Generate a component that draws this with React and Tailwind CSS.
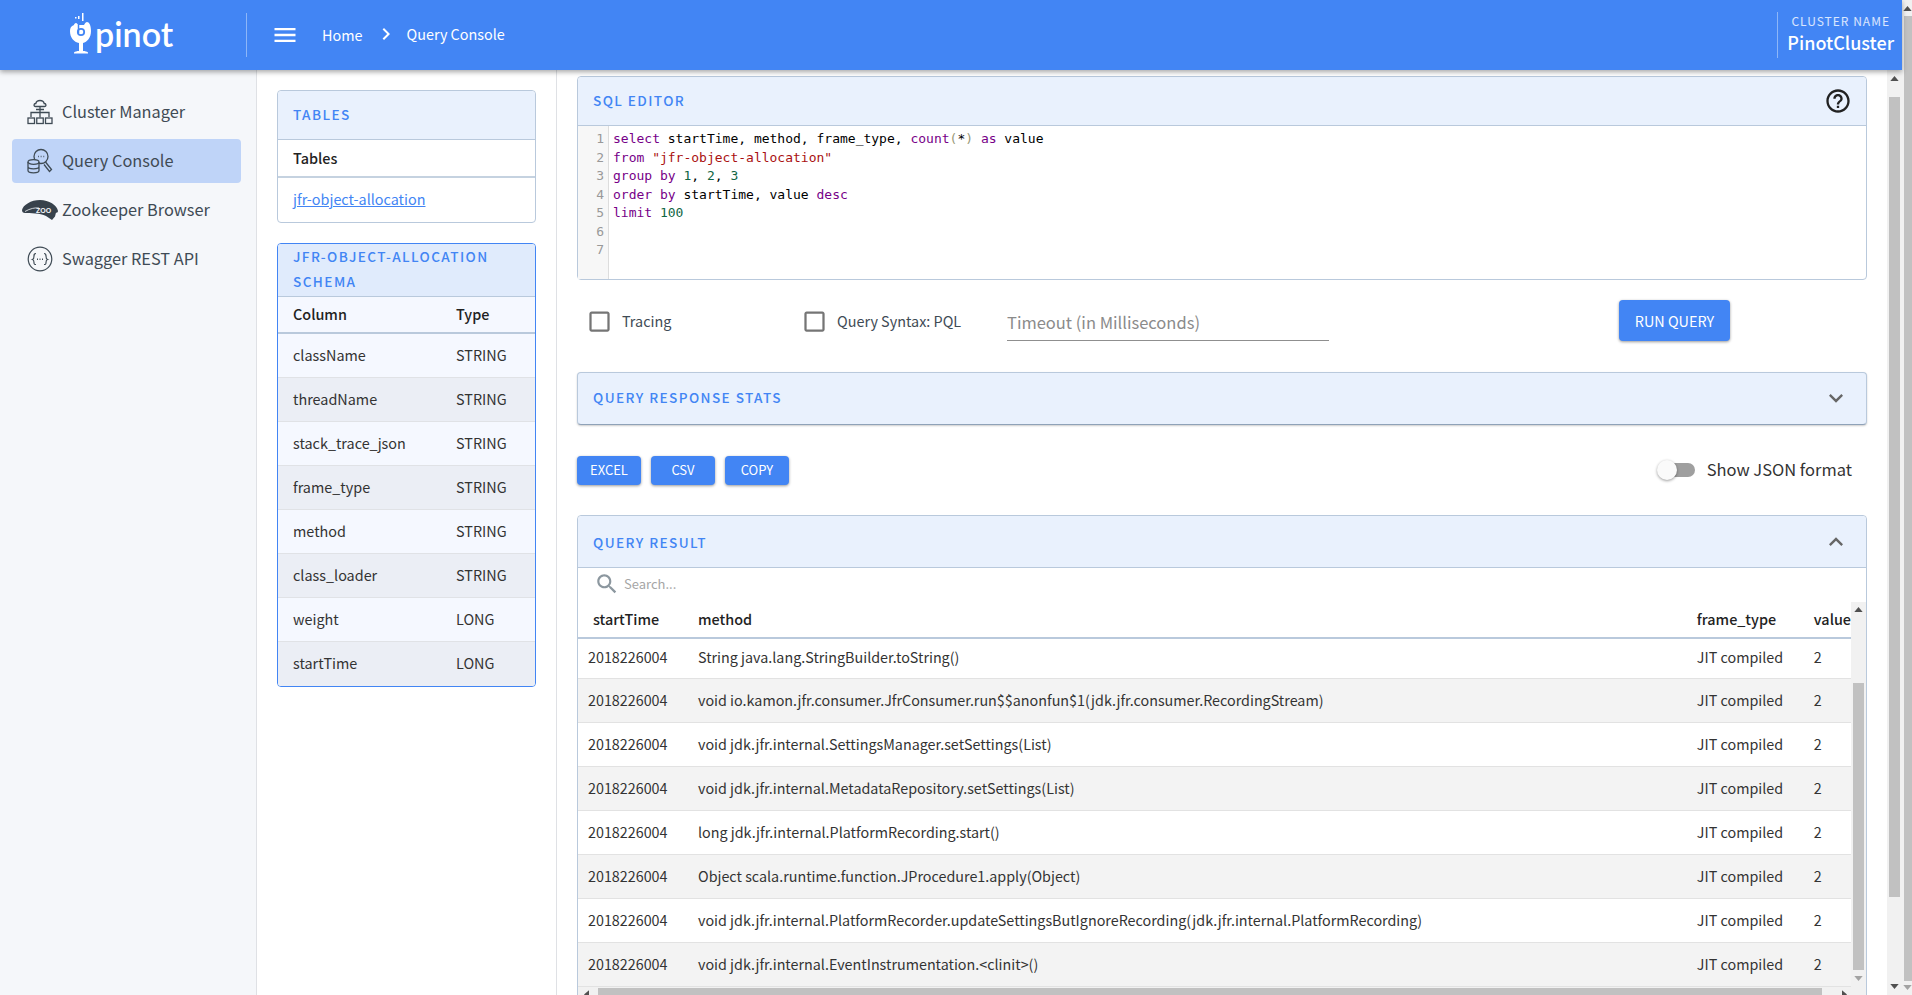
import React from "react";

const MENU = "M3 18h18v-2H3v2zm0-5h18v-2H3v2zm0-7v2h18V6H3z";
const CHEVRON = "M10 6L8.59 7.41 13.17 12l-4.58 4.59L10 18l6-6z";
const EXPAND = "M16.59 8.59L12 13.17 7.41 8.59 6 10l6 6 6-6z";
const COLLAPSE = "M12 8l-6 6 1.41 1.41L12 10.83l4.59 4.58L18 14z";
const HELP =
  "M11 18h2v-2h-2v2zm1-16C6.48 2 2 6.48 2 12s4.48 10 10 10 10-4.48 10-10S17.52 2 12 2zm0 18c-4.41 0-8-3.59-8-8s3.59-8 8-8 8 3.59 8 8-3.59 8-8 8zm0-14c-2.21 0-4 1.79-4 4h2c0-1.1.9-2 2-2s2 .9 2 2c0 2-3 1.75-3 5h2c0-2.25 3-2.5 3-5 0-2.21-1.79-4-4-4z";
const SEARCH =
  "M15.5 14h-.79l-.28-.27C15.41 12.59 16 11.11 16 9.5 16 5.91 13.09 3 9.5 3S3 5.91 3 9.5 5.91 16 9.5 16c1.61 0 3.09-.59 4.23-1.57l.27.28v.79l5 4.99L20.49 19l-4.99-5zm-6 0C7.01 14 5 11.99 5 9.5S7.01 5 9.5 5 14 7.01 14 9.5 11.99 14 9.5 14z";
const CHECKBOX =
  "M19 5v14H5V5h14m0-2H5c-1.1 0-2 .9-2 2v14c0 1.1.9 2 2 2h14c1.1 0 2-.9 2-2V5c0-1.1-.9-2-2-2z";

const SCHEMA = [
  ["className", "STRING"],
  ["threadName", "STRING"],
  ["stack_trace_json", "STRING"],
  ["frame_type", "STRING"],
  ["method", "STRING"],
  ["class_loader", "STRING"],
  ["weight", "LONG"],
  ["startTime", "LONG"],
];

const RESULTS = [
  "String java.lang.StringBuilder.toString()",
  "void io.kamon.jfr.consumer.JfrConsumer.run$$anonfun$1(jdk.jfr.consumer.RecordingStream)",
  "void jdk.jfr.internal.SettingsManager.setSettings(List)",
  "void jdk.jfr.internal.MetadataRepository.setSettings(List)",
  "long jdk.jfr.internal.PlatformRecording.start()",
  "Object scala.runtime.function.JProcedure1.apply(Object)",
  "void jdk.jfr.internal.PlatformRecorder.updateSettingsButIgnoreRecording(jdk.jfr.internal.PlatformRecording)",
  "void jdk.jfr.internal.EventInstrumentation.<clinit>()",
];

const Kw = ({ children }) => <span className="text-[#770088]">{children}</span>;
const Num = ({ children }) => <span className="text-[#116644]">{children}</span>;

const CODE = [
  <>
    <Kw>select</Kw> startTime, method, frame_type, <Kw>count</Kw>
    <span className="text-[#999977]">(</span>*<span className="text-[#999977]">)</span> <Kw>as</Kw> value
  </>,
  <>
    <Kw>from</Kw> <span className="text-[#aa1111]">"jfr-object-allocation"</span>
  </>,
  <>
    <Kw>group</Kw> <Kw>by</Kw> <Num>1</Num>, <Num>2</Num>, <Num>3</Num>
  </>,
  <>
    <Kw>order</Kw> <Kw>by</Kw> startTime, value <Kw>desc</Kw>
  </>,
  <>
    <Kw>limit</Kw> <Num>100</Num>
  </>,
  <>&nbsp;</>,
  <>&nbsp;</>,
];

const Icon = ({ d, className }) => (
  <svg viewBox="0 0 24 24" fill="currentColor" className={className}>
    <path d={d} />
  </svg>
);

const ClusterIcon = () => (
  <svg viewBox="0 0 26 26" className="w-[26px] h-[26px]" fill="none" stroke="#3f4b55" strokeWidth="1.3">
    <path d="M8.5 7.5c-2 0-2-3 .3-3 .4-2 2-3 4.200-3s3.800 1 4.200 3c2.300 0 2.300 3 .3 3z" />
    <path d="M13 7.500v11M4 18v-4.500h18V18M13 10.500h-4M13 10.500h4" />
    <rect x="1" y="19" width="6.500" height="5.500" />
    <rect x="9.750" y="19" width="6.500" height="5.500" />
    <rect x="18.500" y="19" width="6.500" height="5.500" />
  </svg>
);

const QueryIcon = () => (
  <svg viewBox="0 0 26 26" className="w-[26px] h-[26px]" fill="none" stroke="#3f4b55" strokeWidth="1.3">
    <circle cx="14" cy="8.500" r="7" />
    <path d="M18.500 14l6 7.500-2 2-5.500-7" />
    <ellipse cx="6.500" cy="14" rx="5.500" ry="2.300" fill="#bfd4f8" />
    <path d="M1 14v8.500c0 1.300 2.500 2.300 5.500 2.300s5.500-1 5.500-2.300V14M1 18.500c0 1.300 2.500 2.300 5.500 2.300s5.500-1 5.500-2.300" />
    <path d="M11 8.500h.8M13.700 8.500h.8M16.400 8.500h.8" />
  </svg>
);

const ZooIcon = () => (
  <svg viewBox="0 0 36 20" className="w-[36px] h-[20px]">
    <path
      d="M0 10C1 5 9 0 18 0c9 0 17 5 18 11-.2 1.500-1 2-2 1.500l-1 4-3 3.500-6-4C18 13 8 13 3 13c-2 0-3-1-3-3z"
      fill="#37424c"
    />
    <path d="M3 11.500c5-3 10-4 14-3.500" stroke="#f5f7fa" strokeWidth="0.8" fill="none" />
    <text x="14" y="13" fontSize="7" fontWeight="700" fill="#f5f7fa" fontFamily="Liberation Sans, sans-serif">
      ZOO
    </text>
  </svg>
);

const SwaggerIcon = () => (
  <svg viewBox="0 0 26 26" className="w-[26px] h-[26px]" fill="none" stroke="#3f4b55" strokeWidth="1.200">
    <circle cx="13" cy="13" r="11.800" />
    <path d="M9 7.500c-2 0-2 1-2 2.500s0 3-1.500 3.500C7 14 7 15 7 16.500s0 2 2 2M17 7.500c2 0 2 1 2 2.500s0 3 1.500 3.500C19 14 19 15 19 16.500s0 2-2 2" />
    <path d="M10 13.300h1M12.500 13.300h1M15 13.300h1" strokeWidth="1.500" />
  </svg>
);

const Logo = () => (
  <div className="flex items-end ml-[69px] w-[104px]">
    <svg viewBox="0 0 24 44" className="w-[24px] h-[44px] shrink-0 mb-[1px]">
      <path
        d="M5 12c0-1 1-2 2-2 1 0 1.500 1 2 2h6c1-2 2-3 3-3 2 0 4 3 4 9 0 7-4 11-8 12v8c2 0 4 .5 5 1.500v1H5v-1c1-1 3-1.500 5-1.500v-8c-5-1-9-5-9-12 0-3 1-5 4-6z"
        fill="#fff"
      />
      <circle cx="12" cy="19" r="3.200" fill="none" stroke="#4285f4" strokeWidth="1.800" />
      <path d="M9.500 12v8" stroke="#4285f4" strokeWidth="1.500" />
      <rect x="9" y="3" width="1.500" height="3" fill="#fff" />
      <rect x="13" y="0" width="1.500" height="8" fill="#fff" />
      <rect x="6" y="4" width="1.500" height="1.500" fill="#fff" />
    </svg>
    <span className="ml-[2px] font-['Lato',sans-serif] font-semibold text-[34px] leading-[40px] text-white mb-[4px]">
      pinot
    </span>
  </div>
);

const NavItem = ({ icon, label, active }) => (
  <div
    className={`flex items-center h-[44px] mb-[5px] ml-[12px] mr-[15px] rounded text-[16.320px] text-[#3f4b55] ${
      active ? "bg-[#bfd4f8]" : ""
    }`}
  >
    <div className="w-[44px] ml-[6px] flex justify-center shrink-0">{icon}</div>
    <span className="mb-[2px]">{label}</span>
  </div>
);

const Title = ({ children, className = "" }) => (
  <span className={`text-[13.600px] font-medium tracking-[1.400px] text-[#4285f4] ${className}`}>{children}</span>
);

const BlueButton = ({ children, className = "" }) => (
  <button className={`bg-[#4285f4] text-white rounded shadow-[0_1px_3px_rgba(0,0,0,0.4)] flex items-center justify-center ${className}`}>
    {children}
  </button>
);

const ArrowUp = ({ color = "#505050" }) => (
  <svg viewBox="0 0 10 6" className="w-[9px] h-[5px]">
    <path d="M5 0l5 6H0z" fill={color} />
  </svg>
);
const ArrowDown = ({ color = "#505050" }) => (
  <svg viewBox="0 0 10 6" className="w-[9px] h-[5px]">
    <path d="M5 6l5-6H0z" fill={color} />
  </svg>
);

const Check = ({ label, className }) => (
  <div className={`flex items-center ${className}`}>
    <Icon d={CHECKBOX} className="w-[27px] h-[27px] text-[#757575] shrink-0" />
    <span className="ml-[9px] mb-[2px] text-[14.400px] text-[#3f4b55]">{label}</span>
  </div>
);

export default function App() {
  return (
    <div className="flex h-screen w-full overflow-hidden bg-white font-['Noto_Sans_CJK_SC','Noto_Sans',sans-serif] text-[#333]">
      <div className="flex-1 flex flex-col min-w-0">
        {/* top bar */}
        <header className="relative z-10 h-[70px] shrink-0 bg-[#4285f4] shadow-[0_2px_5px_rgba(0,0,0,0.35)] flex items-center text-white">
          <Logo />
          <div className="w-px h-[44px] bg-white/40 ml-[73px]" />
          <Icon d={MENU} className="w-[28px] h-[28px] ml-[24px]" />
          <span className="ml-[23px] text-[14.400px]">Home</span>
          <Icon d={CHEVRON} className="w-[24px] h-[24px] ml-[11px] -mt-[2px]" />
          <span className="ml-[9px] text-[14.400px] -mt-[3px]">Query Console</span>
          <div className="ml-auto h-[46px] border-l border-white/40 pl-[9px] pr-[8px] flex flex-col items-center">
            <span className="text-[12px] tracking-[1px] leading-[17px] text-white/80">CLUSTER NAME</span>
            <span className="text-[18px] leading-[27px] font-medium">PinotCluster</span>
          </div>
        </header>

        <div className="flex-1 flex min-h-0">
          {/* left nav */}
          <nav className="w-[257px] shrink-0 bg-[#f5f7fa] border-r border-[#dfe1e5] pt-[20px]">
            <NavItem icon={<ClusterIcon />} label="Cluster Manager" />
            <NavItem icon={<QueryIcon />} label="Query Console" active />
            <NavItem icon={<ZooIcon />} label="Zookeeper Browser" />
            <NavItem icon={<SwaggerIcon />} label="Swagger REST API" />
          </nav>

          {/* tables column */}
          <aside className="w-[300px] shrink-0 border-r border-[#dfe1e5] pt-[20px] px-[20px]">
            <div className="border border-[#b9c9dc] rounded">
              <div className="h-[49px] bg-[#e9f1fd] border-b border-[#b9c9dc] flex items-center pl-[15px] rounded-t">
                <Title className="mb-[2px]">TABLES</Title>
              </div>
              <div className="h-[38px] border-b-2 border-[#c5d2e0] flex items-center pl-[15px] text-[14.400px] font-medium text-[#222]">
                Tables
              </div>
              <div className="h-[44px] flex items-center pl-[15px] pb-[2px] text-[14.400px] text-[#4285f4] underline">
                jfr-object-allocation
              </div>
            </div>

            <div className="mt-[20px] border border-[#4285f4] rounded overflow-hidden">
              <div className="h-[53px] bg-[#e0ebfc] border-b border-[#b9c9dc] pl-[15px] pb-[3px] flex items-center">
                <Title className="leading-[24.500px]">JFR-OBJECT-ALLOCATION SCHEMA</Title>
              </div>
              <div className="h-[37px] bg-[#f5f8ff] border-b-2 border-[#b9c9dc] flex items-center pl-[15px] pb-[2px] text-[14.400px] font-medium text-[#222]">
                <span className="w-[163px]">Column</span>
                <span>Type</span>
              </div>
              {SCHEMA.map(([name, type], i) => (
                <div
                  key={name}
                  className={`h-[44px] flex items-center pl-[15px] pb-[2px] text-[14.400px] border-b border-[#e0e2e6] last:border-b-0 ${
                    i % 2 === 0 ? "bg-[#f5f8ff]" : "bg-[#ebeef5]"
                  }`}
                >
                  <span className="w-[163px]">{name}</span>
                  <span>{type}</span>
                </div>
              ))}
            </div>
          </aside>

          {/* main */}
          <main className="flex-1 min-w-0 overflow-hidden pt-[6px] px-[20px]">
            <div className="border border-[#b9c9dc] rounded">
              <div className="h-[49px] bg-[#e9f1fd] border-b border-[#b9c9dc] flex items-center pl-[15px] pr-[14px] justify-between rounded-t">
                <Title className="mb-[2px]">SQL EDITOR</Title>
                <Icon d={HELP} className="w-[28px] h-[28px] text-[#222]" />
              </div>
              <div className="h-[153px] flex font-['DejaVu_Sans_Mono',monospace] text-[13px] leading-[18.500px] text-black">
                <div className="w-[31px] bg-[#f7f7f7] border-r border-[#dddddd] pt-[4px] pr-[4px] text-right text-[#999]">
                  {CODE.map((_, i) => (
                    <div key={i}>{i + 1}</div>
                  ))}
                </div>
                <div className="pl-[4px] pt-[4px]">
                  {CODE.map((line, i) => (
                    <div key={i} className="whitespace-pre">
                      {line}
                    </div>
                  ))}
                </div>
              </div>
            </div>

            <div className="flex h-[61px] mt-[21px] items-start pr-[137px]">
              <Check label="Tracing" className="ml-[9px] w-[215px] mt-[7px]" />
              <Check label="Query Syntax: PQL" className="w-[206px] mt-[7px]" />
              <div className="w-[322px] h-[39px] border-b border-[#8f8f8f] flex items-center pt-[2px] mt-[1px] text-[16.500px] text-[#8b8b8b]">
                Timeout (in Milliseconds)
              </div>
              <BlueButton className="ml-auto w-[111px] h-[41px] -mt-[1px] text-[14.400px]">RUN QUERY</BlueButton>
            </div>

            <div className="mt-[10px] h-[53px] border border-[#b9c9dc] border-b-[#8fa2b8] rounded bg-[#e9f1fd] shadow-[0_1px_2px_rgba(0,0,0,0.2)] flex items-center justify-between pl-[15px] pr-[16px]">
              <Title className="mb-[2px]">QUERY RESPONSE STATS</Title>
              <Icon d={EXPAND} className="w-[28px] h-[28px] text-[#666] mb-[2px]" />
            </div>

            <div className="mt-[30px] flex items-center h-[30px] gap-[10px]">
              <BlueButton className="w-[64px] h-[29px] text-[13px]">EXCEL</BlueButton>
              <BlueButton className="w-[64px] h-[29px] text-[13px]">CSV</BlueButton>
              <BlueButton className="w-[64px] h-[29px] text-[13px]">COPY</BlueButton>
              <div className="ml-auto flex items-center mr-[15px]">
                <div className="relative w-[37px] h-[14px] rounded-full bg-[#9f9f9f]">
                  <div className="absolute -left-[1px] -top-[3px] w-[20px] h-[20px] rounded-full bg-[#fafafa] shadow-[0_1px_3px_rgba(0,0,0,0.4)]" />
                </div>
                <span className="ml-[12px] mb-[2px] text-[16.500px] text-[#333]">Show JSON format</span>
              </div>
            </div>

            <div className="mt-[30px] border border-[#b9c9dc] rounded">
              <div className="h-[52px] bg-[#e9f1fd] border-b border-[#b9c9dc] flex items-center justify-between pl-[15px] pr-[16px] rounded-t">
                <Title className="mt-[2px]">QUERY RESULT</Title>
                <Icon d={COLLAPSE} className="w-[28px] h-[28px] text-[#666]" />
              </div>
              <div className="h-[34px] flex items-center pl-[16px] pb-[2px] text-[#a6a6a6]">
                <Icon d={SEARCH} className="w-[26px] h-[26px] text-[#8c979f]" />
                <span className="ml-[4px] text-[13px]">Search...</span>
              </div>

              <div className="flex">
                <table className="flex-1 table-fixed border-collapse self-start text-[14.330px]">
                  <colgroup>
                    <col className="w-[111px]" />
                    <col />
                    <col className="w-[117px]" />
                    <col className="w-[36px]" />
                  </colgroup>
                  <thead>
                    <tr className="h-[36px] border-b-2 border-[#b9c9dc] text-[#222] text-left">
                      <th className="font-medium pl-[15px] pb-[2px] text-[14.400px]">startTime</th>
                      <th className="font-medium pl-[9px] pb-[2px] text-[14.400px]">method</th>
                      <th className="font-medium pl-0 pb-[2px] text-[14.400px]">frame_type</th>
                      <th className="font-medium pl-0 pb-[2px] text-[14.400px] whitespace-nowrap">value</th>
                    </tr>
                  </thead>
                  <tbody>
                    {RESULTS.map((m, i) => (
                      <tr
                        key={m}
                        className={`${i === 0 ? "h-[40px]" : "h-[44px]"} border-b border-[#e2e2e2] ${
                          i % 2 ? "bg-[#f3f3f3]" : "bg-white"
                        }`}
                      >
                        <td className={`pl-[10px] ${i === 0 ? "pb-[4px]" : ""}`}>2018226004</td>
                        <td className={`pl-[9px] whitespace-nowrap ${i === 0 ? "pb-[4px]" : ""}`}>{m}</td>
                        <td className={i === 0 ? "pb-[4px]" : ""}>JIT compiled</td>
                        <td className={i === 0 ? "pb-[4px]" : ""}>2</td>
                      </tr>
                    ))}
                  </tbody>
                </table>
                <div className="w-[15px] shrink-0 bg-[#f1f1f1] flex flex-col items-center pt-[5px]">
                  <ArrowUp />
                  <div className="mt-[71px] w-[11px] h-[287px] bg-[#c1c1c1]" />
                  <div className="mt-[6px]">
                    <ArrowDown color="#a3a3a3" />
                  </div>
                </div>
              </div>
              {/* horizontal scrollbar */}
              <div className="h-[15px] bg-[#f1f1f1] flex items-center pl-[4px]">
                <div className="-rotate-90">
                  <ArrowUp />
                </div>
                <div className="ml-[7px] w-[1224px] h-[8px] self-start mt-[1px] bg-[#c1c1c1]" />
                <div className="ml-[18px] rotate-90">
                  <ArrowUp />
                </div>
              </div>
            </div>
          </main>

          {/* main scrollbar */}
          <div className="w-[15px] shrink-0 bg-[#f1f1f1] flex flex-col items-center pt-[6px]">
            <ArrowUp />
            <div className="mt-[16px] w-[11px] h-[800px] bg-[#c1c1c1]" />
            <div className="mt-[87px]">
              <ArrowDown />
            </div>
          </div>
        </div>
      </div>

      {/* page scrollbar */}
      <div className="w-[10px] shrink-0 bg-[#f1f1f1] flex flex-col items-center pt-[6px] pl-[1px]">
        <ArrowUp />
        <div className="mt-[5px] w-[8px] h-[965px] bg-[#c1c1c1]" />
        <div className="mt-[4px]">
          <ArrowDown color="#a3a3a3" />
        </div>
      </div>
    </div>
  );
}
